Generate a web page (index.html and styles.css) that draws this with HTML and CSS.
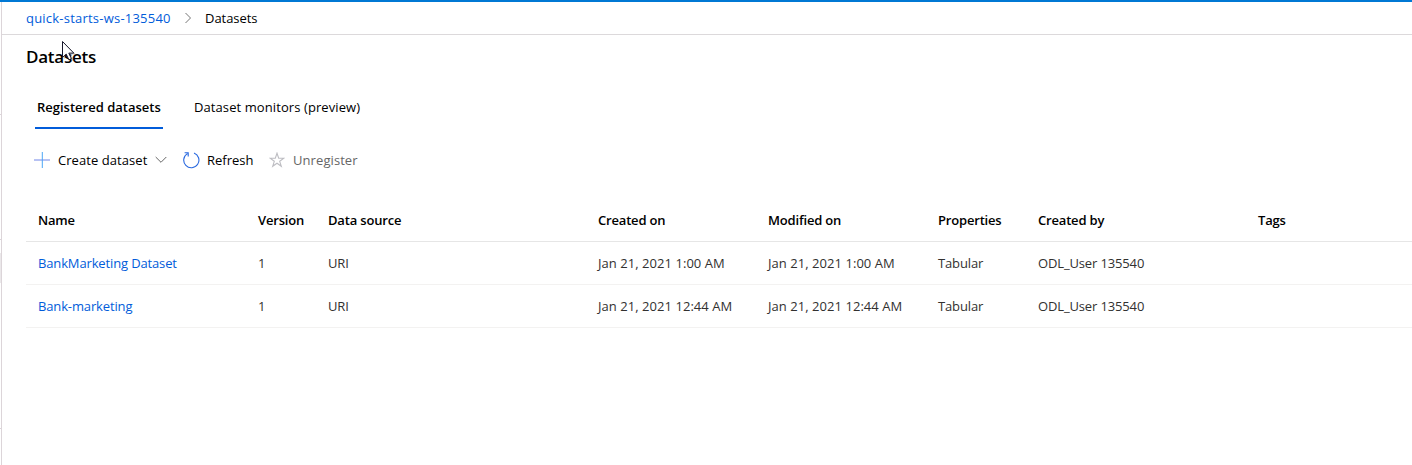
FILE: index.html
```html
<!DOCTYPE html>
<html lang="en">
<head>
<meta charset="utf-8">
<title>Datasets</title>
<link rel="stylesheet" href="styles.css">
</head>
<body>
<div class="app">
  <aside class="rail"><i class="rail-line first"></i><i class="rail-line second"></i><i class="rail-thumb"></i><i class="rail-line third"></i></aside>
  <div class="content">
    <nav class="breadcrumb">
      <a class="crumb-link">quick-starts-ws-135540</a>
      <svg class="crumb-sep" width="8" height="12" viewBox="0 0 8 12"><path d="M1.5 1l5 5-5 5"/></svg>
      <span class="crumb-current">Datasets</span>
    </nav>
    <main>
      <h1>Datasets</h1>
      <div class="tabs">
        <div class="tab active"><span>Registered datasets</span></div>
        <div class="tab preview"><span>Dataset monitors (preview)</span></div>
      </div>
      <div class="toolbar">
        <svg class="icon plus" width="16" height="16" viewBox="0 0 16 16"><path class="h" d="M0 8h16"/><path class="v" d="M8.3 0v16"/></svg>
        <span class="label create">Create dataset</span>
        <svg class="icon chevron" width="12" height="8" viewBox="0 0 12 8"><path d="M.7 1l5.3 5.3L11.3 1"/></svg>
        <svg class="icon refresh" width="18" height="18" viewBox="0 0 18 18"><path d="M12 2A7.6 7.6 0 1 1 5.4 2.6M2.6 1.8h3.6v3.8"/></svg>
        <span class="label reload">Refresh</span>
        <svg class="icon star" width="16" height="16" viewBox="0 0 16 16"><path d="M8 1.2l1.7 5h5.2l-4.2 3.1 1.6 5L8 11.2l-4.3 3.1 1.6-5L1.1 6.2h5.2z"/></svg>
        <span class="label disabled">Unregister</span>
      </div>
      <div class="table">
        <div class="row head">
          <span>Name</span><span>Version</span><span>Data source</span><span>Created on</span><span>Modified on</span><span>Properties</span><span>Created by</span><span>Tags</span>
        </div>
        <div class="row">
          <a>BankMarketing Dataset</a><span>1</span><span>URI</span><span class="date">Jan 21, 2021 1:00 AM</span><span class="date">Jan 21, 2021 1:00 AM</span><span>Tabular</span><span>ODL_User 135540</span><span></span>
        </div>
        <div class="row">
          <a>Bank-marketing</a><span>1</span><span>URI</span><span class="date">Jan 21, 2021 12:44 AM</span><span class="date">Jan 21, 2021 12:44 AM</span><span>Tabular</span><span>ODL_User 135540</span><span></span>
        </div>
      </div>
    </main>
  </div>
  <svg class="cursor" width="16" height="24" viewBox="0 0 16 24"><path class="shadow" d="M3 3v16l4-3.5 3 6 3-1.5-3-5.5h5z"/><path class="arrow" d="M1.5 1.5v16l3.7-3.4 2.7 5.7 2.5-1.2-2.6-5.5h5z"/></svg>
</div>
</body>
</html>
```
FILE: styles.css
```css
* { box-sizing: border-box; }
body {
  margin: 0;
  background: #fff;
  color: #000;
  font: 13px/20px "Open Sans", "Noto Sans", sans-serif;
}
.app {
  position: relative;
  display: flex;
  height: 465px;
  border-top: 2px solid #0078d4;
  overflow: hidden;
}
.rail {
  width: 2px;
  flex: none;
  display: flex;
  flex-direction: column;
  border-right: 1px solid #dcd5d9;
}
.rail i { flex: none; background: #dcd5d9; }
.rail-line { height: 1px; }
.first { margin-top: 112px; }
.second { margin-top: 124px; }
.rail .rail-thumb { height: 30px; margin-top: 13px; background: #ebe8ea; }
.third { margin-top: 145px; }
.content { flex: 1; min-width: 0; }
.breadcrumb {
  display: flex;
  align-items: center;
  height: 33px;
  padding-left: 24px;
  border-bottom: 1px solid #dcd9db;
}
a { color: #015cda; }
.crumb-link { width: 145px; white-space: nowrap; letter-spacing: .22px; }
.crumb-sep { margin: 0 13px; fill: none; stroke: #767676; }
.crumb-current { letter-spacing: -.05px; }
main { padding-left: 24px; }
h1 {
  margin: 0;
  padding-top: 10px;
  font-size: 17px;
  line-height: 24px;
  font-weight: 600;
  letter-spacing: -.25px;
}
.tabs { display: flex; gap: 29px; padding: 22px 0 0 9px; }
.tab { height: 38px; padding: 6px 2px 0; white-space: nowrap; }
.tab.active { width: 128px; font-weight: 600; border-bottom: 2px solid #015cda; }
.preview { letter-spacing: .09px; }
.toolbar {
  display: flex;
  align-items: center;
  height: 62px;
  padding-left: 8px;
}
.icon { flex: none; fill: none; }
.label { white-space: nowrap; }
.plus .h { stroke: #7186e8; }
.plus .v { stroke: #4ba7f5; }
.create { width: 90px; margin-left: 8px; letter-spacing: .06px; }
.chevron { margin-left: 7px; stroke: #666; }
.refresh { margin-left: 15px; stroke: #2868df; stroke-width: 1.1; }
.reload { width: 46px; margin-left: 7px; }
.star { margin-left: 16px; stroke: #bdbdc2; stroke-width: 1.1; }
.disabled { margin-left: 8px; color: #666; letter-spacing: .08px; }
.table { padding-top: 8px; }
.row {
  display: grid;
  grid-template-columns: 220px 70px 270px 170px 170px 100px 220px 1fr;
  align-items: center;
  height: 43px;
  padding-left: 12px;
  border-bottom: 1px solid #f3f2f1;
  color: #323130;
  white-space: nowrap;
  letter-spacing: -.14px;
}
.date { letter-spacing: .05px; }
.head { font-weight: 600; color: #000; border-color: #e6e6e6; letter-spacing: -.18px; }
.cursor { position: absolute; left: 61px; top: 38px; }
.cursor .shadow { fill: #000; opacity: .2; }
.cursor .arrow { fill: #fff; stroke: #17172b; }
```
